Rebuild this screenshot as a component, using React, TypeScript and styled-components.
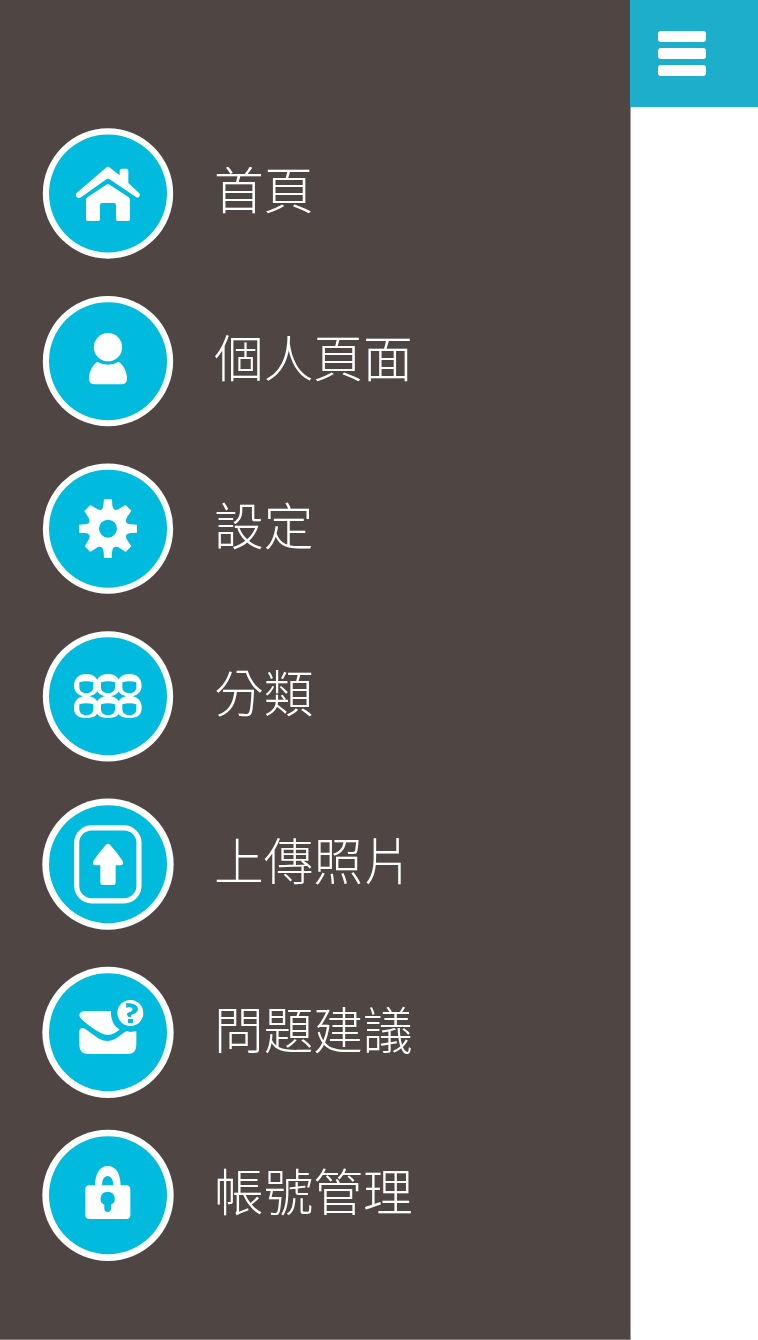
import React from "react";
import styled, { createGlobalStyle } from "styled-components";

const GlobalStyle = createGlobalStyle`
  body { margin: 0; background: #fff; }
`;

const Screen = styled.div`
  display: flex;
  width: 758px;
  height: 1340px;
  overflow: hidden;
  background: #fff;
  font-family: "Noto Sans CJK TC", sans-serif;
`;

const Drawer = styled.nav`
  box-sizing: border-box;
  width: 631px;
  flex: none;
  padding: 124px 0 0 38px;
  background: #4f4643;
  border-right: 1px solid #a19b99;
  border-bottom: 1px solid #81797a;
`;

const Page = styled.main`
  flex: 1;
`;

const TopBar = styled.header`
  display: flex;
  height: 107px;
  margin-left: -1px;
  background: #1daecb;
`;

const MenuButton = styled.button`
  display: flex;
  flex-direction: column;
  gap: 6.3px;
  margin: 31px 0 0 28px;
  padding: 0;
  border: 0;
  background: none;
  height: 45px;
`;

const Bar = styled.span`
  width: 48px;
  height: 10.8px;
  border-radius: 3px;
  background: #fff;
`;

const Item = styled.a<{ $gap: number }>`
  display: flex;
  height: 140px;
  margin-bottom: ${(p) => p.$gap}px;
  color: #fff;
`;

const Icon = styled.svg`
  width: 140px;
  height: 140px;
  flex: none;
  fill: #fff;
`;

const Label = styled.span<{ $top: number }>`
  margin: ${(p) => p.$top}px 0 0 36px;
  font-size: 49.7px;
  line-height: 72px;
  font-weight: 300;
  white-space: nowrap;
`;

const BLUE = "#00bbdd";

const HomeIcon = () => (
  <>
    <path d="M204 131Q210 126 216 131L245 154V140Q245 134 251 134H265Q271 134 271 140V177L304 208Q307 211 305 216Q301 222 295 220L217 167Q210 162 203 167L127 221Q121 224 116 219Q111 213 115 208Z" />
    <path d="M204 183Q210 178 216 183L271 219Q276 223 276 228V286Q276 291 271 291H239Q234 291 234 286V243Q234 237 228 237H192Q186 237 186 243V286Q186 291 181 291H149Q144 291 144 286V228Q144 222 149 219Z" />
  </>
);

const UserIcon = () => (
  <>
    <circle cx="210" cy="168.500" r="42.500" />
    <path d="M178 212Q210 231 242 212C258 223 267 243 267 263Q267 280 249 280H171Q153 280 153 263C153 243 162 223 178 212Z" />
  </>
);

const GearIcon = () => (
  <>
    <path d="M198 121H222L223 139Q225 153 234 153Q240 153 246 148L263 138L280 155L269 172Q262 182 265 190Q268 196 280 196L297 197V221L280 222Q267 223 265 228Q262 236 269 245L280 262L263 279L246 268Q236 261 228 265Q223 268 222 280L221 297H198L197 280Q196 268 191 265Q183 261 174 268L157 279L140 262L150 245Q157 236 154 228Q151 222 140 222L123 221V197L140 196Q153 194 154 188Q156 181 150 173L139 156L157 138L174 148Q184 155 190 152Q195 149 196 139Z" />
    <circle cx="210" cy="209" r="27" fill={BLUE} />
  </>
);

const CategoryIcon = () => (
  <>
    {[145, 210, 274].map((x) => (
      <React.Fragment key={x}>
        <path d={`M${x} 144C${x + 23} 144 ${x + 37} 158 ${x + 37} 179C${x + 37} 200 ${x + 20} 211 ${x} 211C${x - 20} 211 ${x - 37} 200 ${x - 37} 179C${x - 37} 158 ${x - 23} 144 ${x} 144Z`} />
        <path d={`M${x} 209C${x + 23} 209 ${x + 37} 224 ${x + 37} 244C${x + 37} 266 ${x + 28} 276 ${x} 276C${x - 28} 276 ${x - 37} 266 ${x - 37} 244C${x - 37} 224 ${x - 23} 209 ${x} 209Z`} />
      </React.Fragment>
    ))}
    {[145, 210, 274].map((x) =>
      [0, 66].map((dy) => (
        <path
          key={`${x}-${dy}`}
          fill={BLUE}
          d={`M${x - 21} ${169 + dy}Q${x} ${162 + dy} ${x + 21} ${169 + dy}V${184 + dy}C${x + 21} ${195 + dy} ${x + 12} ${202 + dy} ${x} ${202 + dy}C${x - 12} ${202 + dy} ${x - 21} ${195 + dy} ${x - 21} ${184 + dy}Z`}
        />
      ))
    )}
    <path d="M157 210Q171 208 178 203Q185 208 196 210Q185 212 178 217Q171 212 157 210ZM223 210Q235 208 242 203Q249 208 262 210Q249 212 242 217Q235 212 223 210Z" fill={BLUE} />
  </>
);

const UploadIcon = () => (
  <>
    <rect x="116" y="101.500" width="187" height="219" rx="45" fill="none" stroke="#fff" strokeWidth="15.500" />
    <path d="M204 152Q210 147 216 152Q235 172 254 201Q258 212 249 214H233V266Q233 273 226 273H194Q187 273 187 266V214H170Q162 212 166 201Q185 172 204 152Z" />
  </>
);

const FeedbackIcon = () => (
  <>
    <path d="M138 147H219Q217 186 245 203L229 214Q210 224 190 214C170 203 151 190 132 173Q124 165 124 158Q126 149 138 147Z" />
    <path d="M124 207Q125 198 134 198Q139 198 145 203L183 230Q210 244 235 229L260 210Q268 205 275 210L295 208V249Q295 276 268 276H151Q124 276 124 249Z" />
    <circle cx="277" cy="153" r="39" />
    <path d="M264 124C280 122 300 127 300 142C300 151 290 156 281 158Q277 160 280 166L271 164Q262 155 273 151Q284 148 284 142Q283 135 272 136L265 137Z" fill={BLUE} />
    <path d="M270 171H285V183H270Z" fill={BLUE} />
  </>
);

const LockIcon = () => (
  <>
    <path fillRule="evenodd" d="M171 178C172 143 185 120 209 120C234 120 247 143 248 178H265Q277 178 277 190V267Q277 279 265 279H154Q142 279 142 267V190Q142 178 154 178ZM192 178H226C226 161 219 150 209 150C199 150 192 161 192 178Z" />
    <path d="M209 198A20 20 0 0 1 219 236V249Q218 258 209 258Q200 258 199 249V236A20 20 0 0 1 209 198Z" fill={BLUE} />
  </>
);

const items = [
  { label: "首頁", icon: HomeIcon, cy: 208.5, r: 195.5, gap: 27, top: 27 },
  { label: "個人頁面", icon: UserIcon, cy: 210.5, r: 195.5, gap: 28, top: 28 },
  { label: "設定", icon: GearIcon, cy: 209, r: 195.5, gap: 27, top: 28 },
  { label: "分類", icon: CategoryIcon, cy: 211, r: 195.5, gap: 28, top: 28 },
  { label: "上傳照片", icon: UploadIcon, cy: 210.5, r: 197, gap: 28, top: 28 },
  { label: "問題建議", icon: FeedbackIcon, cy: 211, r: 197, gap: 24, top: 29 },
  { label: "帳號管理", icon: LockIcon, cy: 208, r: 197, gap: 0, top: 27 },
];

export default function App() {
  return (
    <>
      <GlobalStyle />
      <Screen>
        <Drawer>
          {items.map(({ label, icon: Glyph, cy, r, gap, top }) => (
            <Item key={label} $gap={gap}>
              <Icon viewBox="0 0 420 420">
                <circle cx="210" cy={cy} r={r} />
                <circle cx="210" cy={cy} r="177" fill={BLUE} />
                <Glyph />
              </Icon>
              <Label $top={top}>{label}</Label>
            </Item>
          ))}
        </Drawer>
        <Page>
          <TopBar>
            <MenuButton aria-label="Menu">
              <Bar />
              <Bar />
              <Bar />
            </MenuButton>
          </TopBar>
        </Page>
      </Screen>
    </>
  );
}
